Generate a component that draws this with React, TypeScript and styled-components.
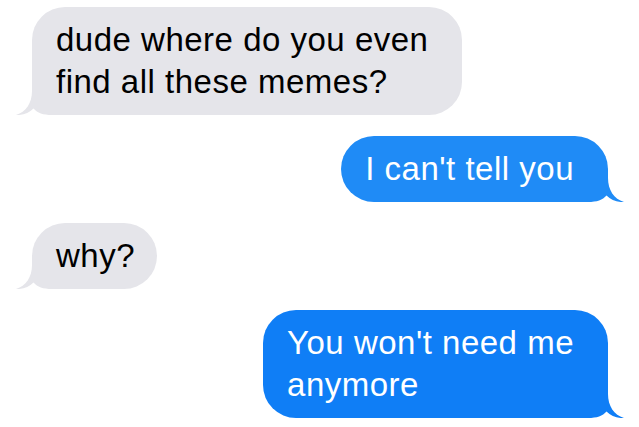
import React from "react";
import styled, { createGlobalStyle } from "styled-components";

const GlobalStyle = createGlobalStyle`
  html, body { margin: 0; padding: 0; background: #ffffff; }
  body { font-family: "Liberation Sans", Arial, sans-serif; }
`;

const Thread = styled.div`
  display: flex;
  flex-direction: column;
  gap: 21px;
  width: 639px;
  box-sizing: border-box;
  padding: 7px 31px 0 32px;
`;

const Row = styled.div<{ $mine: boolean }>`
  display: flex;
  justify-content: ${(p) => (p.$mine ? "flex-end" : "flex-start")};
`;

const Bubble = styled.div<{ $bg: string; $fg: string; $padRight: number }>`
  position: relative;
  background: ${(p) => p.$bg};
  color: ${(p) => p.$fg};
  font-size: 33px;
  line-height: 42px;
  letter-spacing: 0.5px;
  padding: 12px ${(p) => p.$padRight}px 12px 24px;
  border-radius: 33px;
  white-space: pre-line;
`;

const Text = styled.span`
  position: relative;
  z-index: 1;
`;

const Tail = styled.svg<{ $mine: boolean }>`
  position: absolute;
  bottom: 0;
  width: 52px;
  height: 33px;
  ${(p) => (p.$mine ? "right: -17px;" : "left: -17px; transform: scaleX(-1);")}
`;

type Msg = { text: string; mine: boolean; bg: string; padRight: number };

const messages: Msg[] = [
  { text: "dude where do you even\nfind all these memes?", mine: false, bg: "#e5e5ea", padRight: 34 },
  { text: "I can't tell you", mine: true, bg: "#1f8bf6", padRight: 34 },
  { text: "why?", mine: false, bg: "#e5e5ea", padRight: 22 },
  { text: "You won't need me\nanymore", mine: true, bg: "#0f7ef6", padRight: 34 },
];

function Message({ m }: { m: Msg }) {
  return (
    <Row $mine={m.mine}>
      <Bubble $bg={m.bg} $fg={m.mine ? "#ffffff" : "#000000"} $padRight={m.padRight}>
        <Tail $mine={m.mine} viewBox="0 0 52 33" aria-hidden="true">
          <path
            d="M0 0 H35 V9 C35 21 41 30 51 33 C44 33.5 38 31 33.5 26.5 C29.5 31 24 33 15 33 H0 Z"
            fill={m.bg}
          />
        </Tail>
        <Text>{m.text}</Text>
      </Bubble>
    </Row>
  );
}

export default function App() {
  return (
    <>
      <GlobalStyle />
      <Thread>
        {messages.map((m, i) => (
          <Message key={i} m={m} />
        ))}
      </Thread>
    </>
  );
}
